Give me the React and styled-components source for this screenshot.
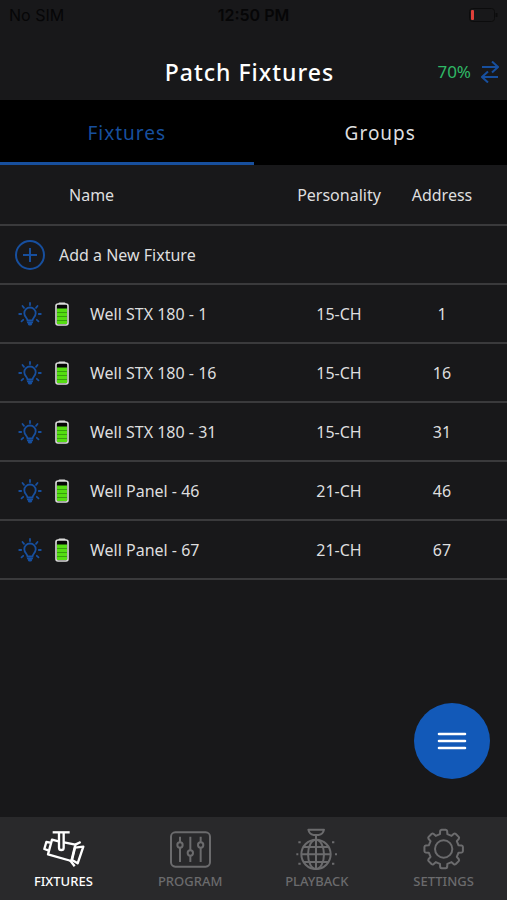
import { useState } from "react";
import styled, { createGlobalStyle, css } from "styled-components";

const colors = {
    background: '#18181a',
    black: '#000000',
    nav: '#29292b',
    line: '#3a3a3c',
    blue: '#1259b8',
    blueDark: '#174f9e',
    text: '#dededf',
    white: '#ffffff',
    muted: '#6b6b6d',
    green: '#2fb866',
    red: '#e0403a',
}

const fontSize = {
    s: '13px',
    m: '16px',
    ml: '17px',
    l: '19px',
    xl: '23px',
}

const fixtures = [
    { name: 'Well STX 180 - 1', personality: '15-CH', address: 1 },
    { name: 'Well STX 180 - 16', personality: '15-CH', address: 16 },
    { name: 'Well STX 180 - 31', personality: '15-CH', address: 31 },
    { name: 'Well Panel - 46', personality: '21-CH', address: 46 },
    { name: 'Well Panel - 67', personality: '21-CH', address: 67 },
]

const GlobalStyle = createGlobalStyle`
  * {
    box-sizing: border-box;
  }

  body {
    margin: 0;
    background-color: ${ colors.background };
    color: ${ colors.text };
    font-family: "Noto Sans", "Open Sans", sans-serif;
    font-size: ${ fontSize.m };
  }

  button {
    padding: 0;
    border: none;
    background: none;
    color: inherit;
    font: inherit;
    cursor: pointer;
  }
`

const Screen = styled.div`
  display: flex;
  flex-direction: column;
  min-height: 100vh;
`

const StatusBar = styled.div`
  display: grid;
  grid-template-columns: 1fr auto 1fr;
  align-items: center;
  height: 30px;
  padding: 0 9px;
  color: #060607;
  font-family: Inter, "Liberation Sans", sans-serif;
  font-size: ${ fontSize.m };

  svg {
    justify-self: end;
  }
`

const Clock = styled.span`
  font-weight: 600;
`

const Header = styled.header`
  display: grid;
  grid-template-columns: 1fr auto 1fr;
  align-items: center;
  padding: 27px 8px 13px 0;
`

const Title = styled.h1`
  grid-column: 2;
  margin: 0;
  color: ${ colors.white };
  font-size: ${ fontSize.xl };
  font-weight: 500;
  letter-spacing: 1px;
  line-height: 30px;
`

const Link = styled.div`
  display: flex;
  align-items: center;
  justify-content: flex-end;
  gap: 10px;
  color: ${ colors.green };
  font-size: ${ fontSize.ml };
  line-height: 30px;
`

const Tabs = styled.div`
  display: flex;
  background-color: ${ colors.black };
`

const Tab = styled.button`
  flex: 1;
  height: 65px;
  padding-top: 3px;
  border-bottom: 3px solid transparent;
  font-size: ${ fontSize.l };
  letter-spacing: 1px;

  ${({ $active }) => $active && css`
    color: ${ colors.blueDark };
    border-bottom-color: ${ colors.blueDark };
  `}
`

const Table = styled.table`
  width: 100%;
  table-layout: fixed;
  border-collapse: separate;
  border-spacing: 0;
`

const HeadCell = styled.th`
  width: ${({ $width }) => $width || 'auto'};
  height: 61px;
  padding: 0;
  padding-left: ${({ $left }) => $left || '0'};
  padding-right: ${({ $right }) => $right || '0'};
  border-bottom: 2px solid ${ colors.line };
  font-weight: 400;
  text-align: ${({ $left }) => $left ? 'left' : 'center'};
`

const Cell = styled.td`
  height: 59px;
  padding: 0;
  padding-right: ${({ $right }) => $right || '0'};
  border-bottom: 2px solid ${ colors.line };
  text-align: center;
`

const AddButton = styled.button`
  display: flex;
  align-items: center;
  gap: 13px;
  width: 100%;
  padding-left: 14px;
`

const NameWrapper = styled.div`
  display: flex;
  align-items: center;
  padding-left: 18px;
  white-space: nowrap;
`

const BulbButton = styled.button`
  display: flex;
  margin-right: 13px;
`

const Name = styled.span`
  margin-left: 21px;
`

const MenuButton = styled.button`
  position: fixed;
  right: 17px;
  bottom: 121px;
  display: flex;
  align-items: center;
  justify-content: center;
  width: 76px;
  height: 76px;
  border-radius: 50%;
  background-color: ${ colors.blue };
`

const Nav = styled.nav`
  position: sticky;
  bottom: 0;
  display: flex;
  margin-top: auto;
  background-color: ${ colors.nav };
`

const NavItem = styled.a`
  display: flex;
  flex: 1;
  flex-direction: column;
  align-items: center;
  gap: 3px;
  padding: 12px 0 10px;
  color: ${({ $active }) => $active ? colors.white : colors.muted};
  font-size: ${ fontSize.s };
  font-weight: 500;
  line-height: 18px;
  text-decoration: none;
`

const PhoneBattery = () => (
    <svg width="29" height="14" viewBox="0 0 29 14" fill="none">
        <rect x="0.5" y="0.5" width="25" height="13" rx="3" stroke="#0c0c0d" />
        <path d="M27.5 5v4" stroke="#0c0c0d" strokeWidth="2" />
        <rect x="2" y="2" width="3" height="10" rx="1" fill={ colors.red } />
    </svg>
)

const SyncIcon = () => (
    <svg width="18" height="22" viewBox="0 0 18 22" fill="none" stroke={ colors.blueDark } strokeWidth="2">
        <path d="M1 6h15M11 0.500l6 5.500-6 5.500" />
        <path d="M17 16H2M7 10.500L1 16l6 5.500" />
    </svg>
)

const PlusIcon = () => (
    <svg width="32" height="32" viewBox="0 0 32 32" fill="none" stroke={ colors.blueDark } strokeWidth="2">
        <circle cx="16" cy="16" r="14" />
        <path d="M16 9v14M9 16h14" />
    </svg>
)

const BulbIcon = () => (
    <svg width="24" height="24" viewBox="0 0 24 24" fill="none" stroke={ colors.blueDark } strokeWidth="1.8" strokeLinecap="round">
        <path d="M9.5 18.5c0-2.5-3.2-3.8-3.2-7.3a5.7 5.7 0 0 1 11.4 0c0 3.5-3.2 4.8-3.2 7.3z" />
        <path d="M10 20.5h4M11 22.3h2" strokeWidth="2.2" />
        <path d="M12 1v2M4.5 4l1.5 1.8M19.5 4L18 5.8M1.2 12h2M20.8 12h2M3.5 19.3l1.7-1.5M20.5 19.3l-1.7-1.5" />
    </svg>
)

const BatteryIcon = () => (
    <svg width="14" height="24" viewBox="0 0 14 24">
        <rect x="3.5" y="0.5" width="7" height="3" rx="1" fill="#dcdcdc" />
        <rect x="1" y="2" width="12" height="21" rx="2" fill="#050505" stroke="#dcdcdc" strokeWidth="1.6" />
        <path d="M2 6.5h10V22H2z" fill="#55dd12" />
        <path d="M2 10.5h10M2 14.5h10M2 18.5h10" stroke="#2f8f0c" strokeWidth="0.8" />
    </svg>
)

const MenuIcon = () => (
    <svg width="30" height="20" viewBox="0 0 30 20" stroke={ colors.white } strokeWidth="2.6" strokeLinecap="round">
        <path d="M2 3h26M2 10h26M2 17h26" />
    </svg>
)

const NavIcon = styled.svg.attrs({
    width: 42,
    height: 40,
    viewBox: '0 0 126 120',
    fill: 'none',
    stroke: 'currentColor',
})`
  overflow: visible;
  stroke-width: ${({ $stroke }) => $stroke || 6};
  stroke-linejoin: round;
`

const SpotlightIcon = () => (
    <NavIcon $stroke={7}>
        <path d="M32 10h51" />
        <path d="M51 10v46a7 7 0 0 0 14 0V10" />
        <path d="M50 37L30 32L18 76L88 96L100 47L66 40" />
        <path d="M25 41L13 39L7 60L19 64" />
        <path d="M100 47L116 39M84 94L98 112" />
        <path d="M124 53L107 103L90 93L99 56Z" />
    </NavIcon>
)

const SlidersIcon = () => (
    <NavIcon>
        <rect x="6" y="10" width="117" height="103" rx="13" />
        <path d="M33 23v17M33 56v43M64 23v41M64 80v19M95 23v17M95 56v43" />
        <circle cx="33" cy="48" r="8" />
        <circle cx="64" cy="72" r="8" />
        <circle cx="95" cy="48" r="8" />
    </NavIcon>
)

const DiscoIcon = () => (
    <NavIcon>
        <path d="M37 2h47c-2 10-8 15-16 16H53C45 17 39 12 37 2z" />
        <path d="M60 18v102" />
        <circle cx="60" cy="76" r="44" />
        <ellipse cx="60" cy="76" rx="24" ry="44" />
        <path d="M16 76h88M23 54h74M23 99h74" />
        <path d="M7 40h7M108 40h7M1 76h6M117 76h6M7 104h7M108 104h7" />
    </NavIcon>
)

const gearPoint = (radius, degrees) => {
    const angle = degrees * Math.PI / 180
    return `${ (62 + radius * Math.sin(angle)).toFixed(1) } ${ (60 - radius * Math.cos(angle)).toFixed(1) }`
}

const gearPath = [0, 45, 90, 135, 180, 225, 270, 315].map((a, i) => (
    `${ i ? 'L' : 'M' }${ gearPoint(46, a - 14) }L${ gearPoint(55, a - 11) }Q${ gearPoint(58, a - 10) } ${ gearPoint(58, a - 6) }`
    + `L${ gearPoint(58, a + 6) }Q${ gearPoint(58, a + 10) } ${ gearPoint(55, a + 11) }L${ gearPoint(46, a + 14) }`
)).join('') + 'Z'

const GearIcon = () => (
    <NavIcon>
        <path d={ gearPath } />
        <circle cx="62" cy="60" r="26" />
    </NavIcon>
)

const navItems = [
    { label: 'FIXTURES', Icon: SpotlightIcon },
    { label: 'PROGRAM', Icon: SlidersIcon },
    { label: 'PLAYBACK', Icon: DiscoIcon },
    { label: 'SETTINGS', Icon: GearIcon },
]

export default function App() {
    const [ tab, setTab ] = useState('Fixtures')
    return(
        <Screen>
            <GlobalStyle />
            <StatusBar>
                <span>No SIM</span>
                <Clock>12:50 PM</Clock>
                <PhoneBattery />
            </StatusBar>
            <Header>
                <Title>Patch Fixtures</Title>
                <Link>
                    <span>70%</span>
                    <SyncIcon />
                </Link>
            </Header>
            <Tabs role="tablist">
                {['Fixtures', 'Groups'].map(label => (
                    <Tab
                        key={label}
                        role="tab"
                        aria-selected={ tab === label }
                        $active={ tab === label }
                        onClick={() => setTab(label)}
                    >
                        { label }
                    </Tab>
                ))}
            </Tabs>
            <Table>
                <thead>
                    <tr>
                        <HeadCell $left="69px">Name</HeadCell>
                        <HeadCell $width="104px">Personality</HeadCell>
                        <HeadCell $width="116px" $right="14px">Address</HeadCell>
                    </tr>
                </thead>
                <tbody>
                    <tr>
                        <Cell colSpan={3}>
                            <AddButton>
                                <PlusIcon />
                                Add a New Fixture
                            </AddButton>
                        </Cell>
                    </tr>
                    {fixtures.map(({ name, personality, address }) => (
                        <tr key={name}>
                            <Cell>
                                <NameWrapper>
                                    <BulbButton aria-label="Identify"><BulbIcon /></BulbButton>
                                    <BatteryIcon />
                                    <Name>{ name }</Name>
                                </NameWrapper>
                            </Cell>
                            <Cell>{ personality }</Cell>
                            <Cell $right="14px">{ address }</Cell>
                        </tr>
                    ))}
                </tbody>
            </Table>
            <MenuButton aria-label="Menu"><MenuIcon /></MenuButton>
            <Nav>
                {navItems.map(({ label, Icon }, i) => (
                    <NavItem key={label} href={ `#${ label.toLowerCase() }` } $active={ i === 0 }>
                        <Icon />
                        { label }
                    </NavItem>
                ))}
            </Nav>
        </Screen>
    )
}
